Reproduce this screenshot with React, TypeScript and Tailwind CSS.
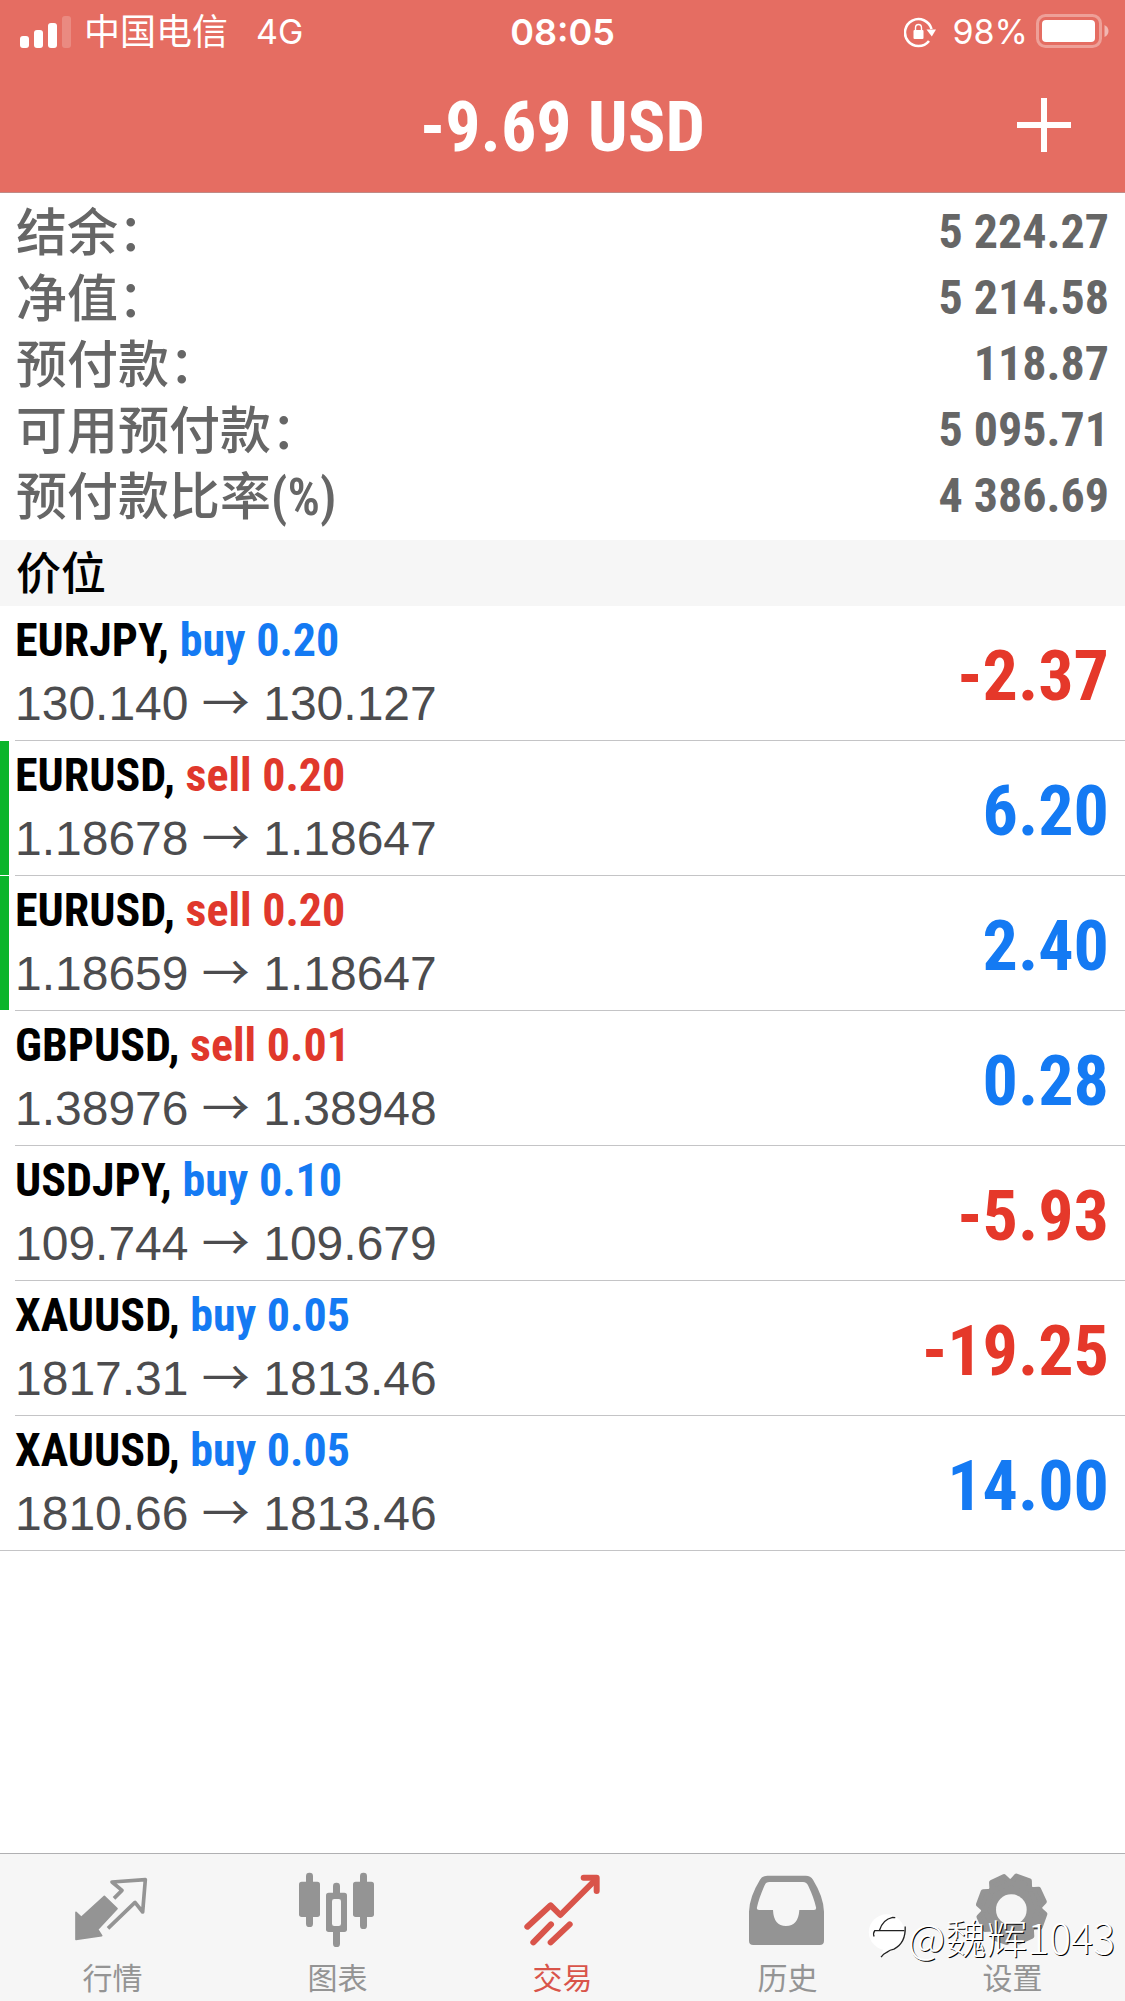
import type { ReactNode } from "react";
import { clsx } from "clsx";

const account = [
  { label: "结余：", value: "5 224.27" },
  { label: "净值：", value: "5 214.58" },
  { label: "预付款：", value: "118.87" },
  { label: "可用预付款：", value: "5 095.71" },
  { label: "预付款比率", unit: "(%)", value: "4 386.69" },
];

interface Position {
  symbol: string;
  side: "buy" | "sell";
  volume: string;
  open: string;
  current: string;
  profit: string;
  marked?: boolean;
}

const positions: Position[] = [
  { symbol: "EURJPY", side: "buy", volume: "0.20", open: "130.140", current: "130.127", profit: "-2.37" },
  { symbol: "EURUSD", side: "sell", volume: "0.20", open: "1.18678", current: "1.18647", profit: "6.20", marked: true },
  { symbol: "EURUSD", side: "sell", volume: "0.20", open: "1.18659", current: "1.18647", profit: "2.40", marked: true },
  { symbol: "GBPUSD", side: "sell", volume: "0.01", open: "1.38976", current: "1.38948", profit: "0.28" },
  { symbol: "USDJPY", side: "buy", volume: "0.10", open: "109.744", current: "109.679", profit: "-5.93" },
  { symbol: "XAUUSD", side: "buy", volume: "0.05", open: "1817.31", current: "1813.46", profit: "-19.25" },
  { symbol: "XAUUSD", side: "buy", volume: "0.05", open: "1810.66", current: "1813.46", profit: "14.00" },
];

function SignalIcon() {
  return (
    <svg className="h-9 w-[52px]" viewBox="0 0 52 36" fill="#fff">
      <rect x="0" y="22" width="9" height="12" rx="3" />
      <rect x="14" y="16" width="9" height="18" rx="3" />
      <rect x="28" y="9" width="9" height="25" rx="3" />
      <rect x="42" y="2" width="9" height="32" rx="3" opacity="0.2" />
    </svg>
  );
}

function RotationLockIcon() {
  return (
    <svg className="size-8" viewBox="0 0 32 32" fill="none" stroke="#fff">
      <path d="M25 25A13.500 13.500 0 1 1 27.500 13" strokeWidth="2.6" />
      <path d="M22.5 13.5h9.500l-4.200 7z" fill="#fff" stroke="none" />
      <rect x="9.500" y="14" width="10" height="9" rx="1" fill="#fff" stroke="none" />
      <path d="M11.500 15v-3a3 3.500 0 0 1 6 0V15" strokeWidth="1.4" />
    </svg>
  );
}

function BatteryIcon() {
  return (
    <svg className="h-9 w-[73px]" viewBox="0 0 73 36" fill="none">
      <rect x="1.5" y="1.5" width="63" height="31" rx="8" stroke="#fff" strokeOpacity="0.35" strokeWidth="3" />
      <rect x="6" y="6" width="53" height="22" rx="4" fill="#fff" />
      <path d="M68.500 11v12q4-2 4-6t-4-6z" fill="#fff" fillOpacity="0.5" />
    </svg>
  );
}

function StatusBar() {
  return (
    <div className="grid grid-cols-3 items-center px-4 pt-[14px] text-[36px] leading-9">
      <div className="ml-1 flex items-center">
        <SignalIcon />
        <span className="ml-3">中国电信</span>
        <span className="ml-7 text-[34px]">4G</span>
      </div>
      <div className="text-center font-semibold">08:05</div>
      <div className="flex items-center justify-end">
        <RotationLockIcon />
        <span className="mr-2 ml-4 text-[34px]">98%</span>
        <BatteryIcon />
      </div>
    </div>
  );
}

function QuotesIcon() {
  return (
    <svg className="size-20" viewBox="99 94 240 240" fill="none" stroke="currentColor">
      <path
        d="M193 173l38 37-58 62 12 19-77 11V221l16 15z"
        fill="currentColor"
        strokeWidth="5"
        strokeLinejoin="round"
      />
      <path d="M222 179l24-24-30-25 100-7-8 97-23-29-81 78" strokeWidth="11" strokeLinejoin="round" />
    </svg>
  );
}

function ChartIcon() {
  return (
    <svg className="size-20" viewBox="774 90 240 240" fill="currentColor">
      <rect x="798" y="98" width="21" height="163" rx="10" />
      <rect x="777" y="125" width="63" height="106" rx="8" />
      <rect x="960" y="98" width="21" height="169" rx="10" />
      <rect x="939" y="125" width="63" height="106" rx="8" />
      <rect x="879" y="128" width="21" height="193" rx="10" />
      <rect x="858" y="158" width="63" height="118" rx="8" />
      <rect x="876" y="177" width="27" height="81" rx="7" fill="#f6f6f6" />
    </svg>
  );
}

function TradeIcon() {
  return (
    <svg
      className="size-20"
      viewBox="127 90 240 240"
      fill="none"
      stroke="currentColor"
      strokeWidth="18"
      strokeLinecap="round"
      strokeLinejoin="round"
    >
      <path d="M140 260l70-64 29 29L345 119" />
      <path d="M309 113h39v40" />
      <path d="M326 114l21 21v-21z" fill="currentColor" strokeWidth="4" />
      <path d="M158 307l53-54M210 307l57-54" />
    </svg>
  );
}

function HistoryIcon() {
  return (
    <svg className="size-20" viewBox="804 90 240 240" fill="currentColor">
      <path
        fillRule="evenodd"
        d="M862 107h115q15 0 22 12 32 52 33 96v87q0 13-13 13H820q-13 0-13-13v-87q1-44 33-96 7-12 22-12zM868 126q-10 0-14 10-17 38-23 66-2 8 6 8h42q2 48 39 48t40-48h42q10 0 8-8-6-28-23-64-5-12-16-12z"
      />
    </svg>
  );
}

function SettingsIcon() {
  return (
    <svg className="size-20" viewBox="399 90 240 240" fill="currentColor">
      <circle cx="515" cy="208" r="92" />
      {[20, 65, 110, 155, 200, 245, 290, 335].map((angle) => (
        <path
          key={angle}
          d="M484 134l10-25h42l10 25z"
          transform={`rotate(${angle} 515 208)`}
          stroke="currentColor"
          strokeWidth="14"
          strokeLinejoin="round"
        />
      ))}
      <circle cx="514" cy="209" r="46" fill="#f6f6f6" />
    </svg>
  );
}

const tabs: { label: string; icon: ReactNode; active?: boolean }[] = [
  { label: "行情", icon: <QuotesIcon /> },
  { label: "图表", icon: <ChartIcon /> },
  { label: "交易", icon: <TradeIcon />, active: true },
  { label: "历史", icon: <HistoryIcon /> },
  { label: "设置", icon: <SettingsIcon /> },
];

function PositionRow({ position, last }: { position: Position; last: boolean }) {
  const { symbol, side, volume, open, current, profit, marked } = position;
  return (
    <li className={clsx("flex", last && "border-b border-[#c4c4c6]")}>
      <div className={clsx("mb-px w-[9px] shrink-0", marked && "bg-[#0bb52b]")} />
      <div
        className={clsx(
          "ml-1.5 flex flex-1 items-center justify-between pr-4",
          !last && "border-b border-[#c4c4c6]",
        )}
      >
        <div className="pt-[3px] pb-[5px]">
          <div className="font-['Roboto_Condensed','Liberation_Sans',sans-serif] text-[46px] leading-[63px] font-bold text-black">
            {symbol},{" "}
            <span className={side === "buy" ? "text-[#147af3]" : "text-[#e0382c]"}>
              {side} {volume}
            </span>
          </div>
          <div className="text-[48px] leading-[63px] text-[#4c4c4e]">
            {open} <span className="font-['Noto_Sans_CJK_SC',sans-serif] leading-none">→</span> {current}
          </div>
        </div>
        <div
          className={clsx(
            "pt-1.5 font-['Roboto_Condensed','Liberation_Sans',sans-serif] text-[70px] leading-none font-bold",
            profit.startsWith("-") ? "text-[#e5382a]" : "text-[#147af3]",
          )}
        >
          {profit}
        </div>
      </div>
    </li>
  );
}

function TabBar() {
  return (
    <nav className="relative flex border-t border-[#b0b0b2] bg-[#f6f6f6] font-['Noto_Sans_CJK_SC',sans-serif]">
      {tabs.map((tab) => (
        <button
          key={tab.label}
          className={clsx(
            "flex flex-1 flex-col items-center pt-4 pb-[7px]",
            tab.active ? "text-[#d9544a]" : "text-[#949494]",
          )}
        >
          {tab.icon}
          <span className="mt-2 text-[30px] leading-9">{tab.label}</span>
        </button>
      ))}
      <div className="absolute right-2.5 bottom-[43px] flex items-center text-white">
        <svg className="h-[45px] w-10" viewBox="85 235 120 136" fill="none">
          <circle cx="141" cy="293" r="54" fill="#fff" />
          <path d="M136 330l-14 40 40-26z" fill="#fff" />
          <path
            d="M103 306q-4-10 2-18h14q10-34 40-40l8 1M120 288h74M197 276q2 50-34 68-12 2-22 10-10 4-17 14"
            stroke="#222"
            strokeWidth="4"
          />
        </svg>
        <span className="text-[41px] leading-11 font-light [text-shadow:1px_1px_0_#000]">@魏辉1043</span>
      </div>
    </nav>
  );
}

export default function App() {
  return (
    <div className="flex min-h-screen flex-col bg-white font-['Liberation_Sans','Noto_Sans_CJK_SC',sans-serif]">
      <header className="border-b border-[#c08a86] bg-[#e56d62] font-['Inter','Noto_Sans_CJK_SC',sans-serif] text-white">
        <StatusBar />
        <div className="grid grid-cols-[1fr_auto_1fr] items-center px-[54px] pt-7 pb-5">
          <h1 className="col-start-2 pt-1 font-['Roboto_Condensed','Liberation_Sans',sans-serif] text-[70px] leading-[90px] font-bold">
            -9.69 USD
          </h1>
          <button aria-label="新订单" className="justify-self-end">
            <svg className="size-[54px]" viewBox="0 0 54 54" stroke="#fff" strokeWidth="6">
              <path d="M27 0v54M0 27h54" />
            </svg>
          </button>
        </div>
      </header>

      <main className="flex-1">
        <dl className="px-4 pt-1.5 pb-[11px] text-[#666]">
          {account.map((row) => (
            <div key={row.label} className="flex items-start justify-between">
              <dt className="font-['Noto_Sans_CJK_SC',sans-serif] text-[51px] leading-[60px] font-medium">
                {row.label}
                {row.unit && (
                  <span className="font-['Roboto_Condensed','Liberation_Sans',sans-serif] text-[51px] leading-none font-semibold">
                    {row.unit}
                  </span>
                )}
              </dt>
              <dd className="font-['Roboto_Condensed','Liberation_Sans',sans-serif] text-[48px] leading-[66px] font-bold">
                {row.value}
              </dd>
            </div>
          ))}
        </dl>

        <h2 className="bg-[#f6f6f6] px-4 pb-1 font-['Noto_Sans_CJK_SC',sans-serif] text-[45px] leading-[62px] font-medium text-black">
          价位
        </h2>
        <ul>
          {positions.map((position, i) => (
            <PositionRow key={i} position={position} last={i === positions.length - 1} />
          ))}
        </ul>
      </main>

      <TabBar />
    </div>
  );
}
